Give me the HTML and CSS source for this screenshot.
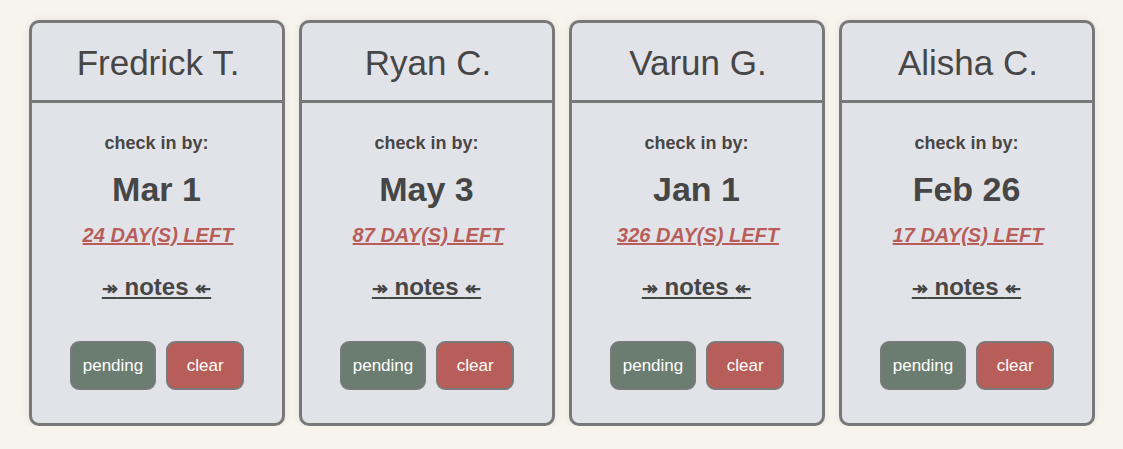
FILE: index.html
```html
<!DOCTYPE html>
<html>
<head>
<meta charset="utf-8">
<link rel="stylesheet" href="styles.css">
</head>
<body>
<main class="board">
  <section class="card">
    <header class="card-head">Fredrick T.</header>
    <div class="card-body">
      <div class="label">check in by:</div>
      <div class="date">Mar 1</div>
      <a class="left">24 DAY(S) LEFT</a>
      <a class="notes"><span class="arrow">↠</span> notes <span class="arrow">↞</span></a>
      <div class="actions">
        <button class="btn pending">pending</button>
        <button class="btn clear">clear</button>
      </div>
    </div>
  </section>
  <section class="card">
    <header class="card-head">Ryan C.</header>
    <div class="card-body">
      <div class="label">check in by:</div>
      <div class="date">May 3</div>
      <a class="left">87 DAY(S) LEFT</a>
      <a class="notes"><span class="arrow">↠</span> notes <span class="arrow">↞</span></a>
      <div class="actions">
        <button class="btn pending">pending</button>
        <button class="btn clear">clear</button>
      </div>
    </div>
  </section>
  <section class="card">
    <header class="card-head">Varun G.</header>
    <div class="card-body">
      <div class="label">check in by:</div>
      <div class="date">Jan 1</div>
      <a class="left">326 DAY(S) LEFT</a>
      <a class="notes"><span class="arrow">↠</span> notes <span class="arrow">↞</span></a>
      <div class="actions">
        <button class="btn pending">pending</button>
        <button class="btn clear">clear</button>
      </div>
    </div>
  </section>
  <section class="card">
    <header class="card-head">Alisha C.</header>
    <div class="card-body">
      <div class="label">check in by:</div>
      <div class="date">Feb 26</div>
      <a class="left">17 DAY(S) LEFT</a>
      <a class="notes"><span class="arrow">↠</span> notes <span class="arrow">↞</span></a>
      <div class="actions">
        <button class="btn pending">pending</button>
        <button class="btn clear">clear</button>
      </div>
    </div>
  </section>
</main>
</body>
</html>
```

FILE: styles.css
```css
html, body {
  margin: 0;
  padding: 0;
  background: #f6f4ec;
}
body {
  font-family: "Liberation Sans", Arial, sans-serif;
  color: #464646;
}
.board {
  display: flex;
  justify-content: center;
  gap: 14px;
  padding-top: 20px;
}
.card {
  width: 256px;
  height: 406px;
  box-sizing: border-box;
  background: #e2e3e9;
  border: 3px solid #787878;
  border-radius: 10px;
  box-shadow: 0 0 8px rgba(0, 0, 0, 0.08);
  display: flex;
  flex-direction: column;
}
.card-head {
  height: 80px;
  border-bottom: 3px solid #787878;
  display: flex;
  align-items: center;
  justify-content: center;
  font-size: 35px;
  padding-top: 2px;
  padding-left: 3px;
  box-sizing: border-box;
}
.card-body {
  display: flex;
  flex-direction: column;
  align-items: center;
  padding-top: 30px;
}
.label {
  font-size: 18px;
  font-weight: bold;
  line-height: 20px;
}
.date {
  font-size: 34px;
  font-weight: bold;
  line-height: 36px;
  margin-top: 18px;
}
.left {
  font-size: 20px;
  font-weight: bold;
  font-style: italic;
  line-height: 22px;
  margin-top: 17px;
  margin-left: 3px;
  color: #b85e5a;
  text-decoration: underline;
}
.notes {
  font-size: 24px;
  font-weight: bold;
  line-height: 26px;
  margin-top: 28px;
  text-decoration: underline;
}
.arrow {
  font-size: 19px;
}
.actions {
  display: flex;
  gap: 10px;
  margin-top: 39px;
  margin-left: 1px;
}
.btn {
  height: 49px;
  min-width: 78px;
  padding: 0 11px;
  border: 2px solid #7a7a7a;
  border-radius: 9px;
  font-family: "Liberation Sans", Arial, sans-serif;
  font-size: 17px;
  color: #ffffff;
}
.pending {
  background: #6b7c71;
}
.clear {
  background: #b85e5a;
}
```
